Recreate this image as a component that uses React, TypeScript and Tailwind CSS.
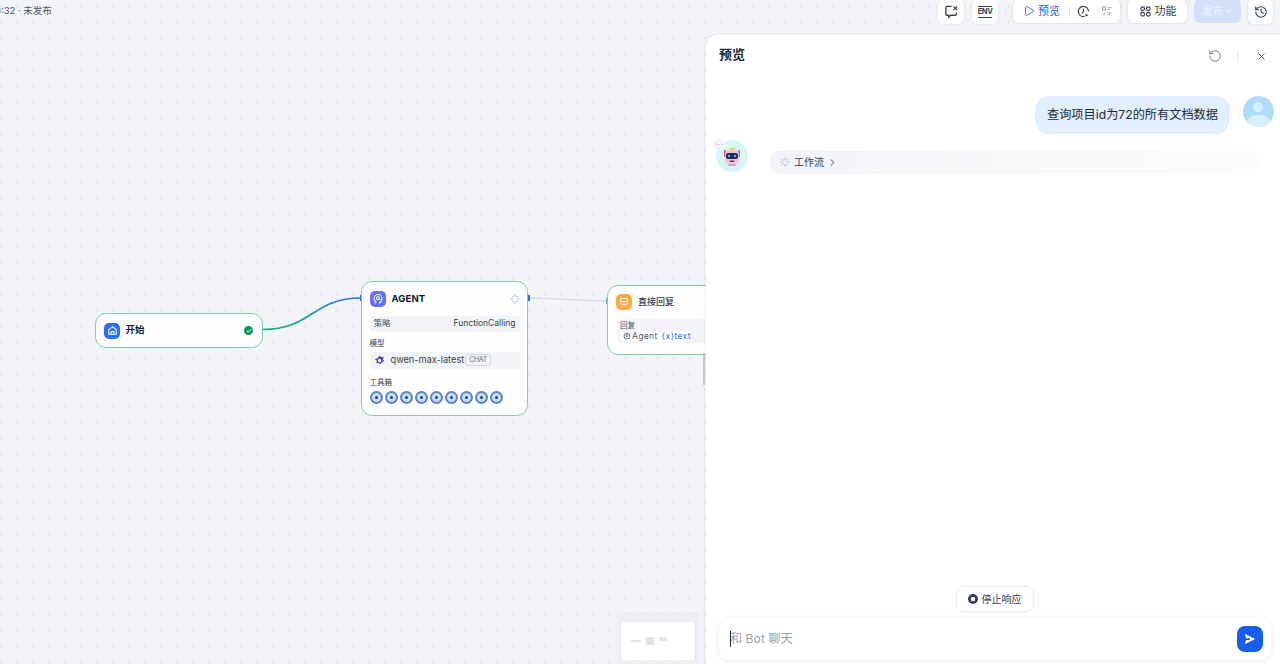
import React from "react";
import { Play, RotateCcw, X, ChevronDown, ChevronRight, History, Check, Loader } from "lucide-react";

const FONT = "font-['Inter','Noto_Sans_CJK_SC',sans-serif]";

function ToolBtn({ children, cls = "w-[26px]" }: { children: React.ReactNode; cls?: string }) {
  return (
    <div className={`h-[25px] ${cls} flex items-center justify-center rounded-md bg-white/80 shadow-[0_0_3px_rgba(16,24,40,0.12)] text-[#354052] shrink-0`}>
      {children}
    </div>
  );
}

function ToolDot() {
  return (
    <div className="w-[13.5px] h-[13.5px] rounded-full bg-[#5b80cc] flex items-center justify-center shrink-0">
      <div className="w-[9px] h-[9px] rounded-full bg-[#c4e2fb] flex items-center justify-center">
        <div className="w-[3.5px] h-[3.5px] rounded-full bg-[#1e3a8a]" />
      </div>
    </div>
  );
}

function Bot() {
  return (
    <svg viewBox="0 0 32 32" className="w-[32px] h-[32px]">
      <circle cx="16" cy="16" r="16" fill="#d5f5f6" />
      <rect x="14" y="8" width="5" height="1.6" fill="#f5c542" />
      <rect x="8" y="10" width="1.8" height="7" fill="#e0556f" />
      <rect x="22.2" y="10" width="1.8" height="7" fill="#e0556f" />
      <rect x="9" y="10" width="14" height="14" rx="4" fill="#eec6dc" />
      <rect x="10" y="13" width="12" height="6" rx="2" fill="#1e2a5a" />
      <circle cx="13" cy="16" r="1.2" fill="#5fb4f5" />
      <circle cx="19" cy="16" r="1.2" fill="#5fb4f5" />
      <rect x="13.5" y="20.5" width="5" height="1.4" rx="0.7" fill="#7a3550" />
      <rect x="12" y="24" width="8" height="2" rx="1" fill="#c9a6d8" />
    </svg>
  );
}

export default function App() {
  return (
    <div className={`${FONT} relative w-[1280px] h-[664px] overflow-hidden flex flex-col bg-[#f2f4f7] bg-[radial-gradient(#dfe2e8_0.7px,transparent_0.8px)] bg-[size:16px_16px] bg-[position:-7px_-2px]`}>
      {/* top bar */}
      <div className="h-[35px] shrink-0 flex items-start justify-between pr-[7px]">
        <div className="text-[9.5px] leading-[22px] text-[#475467] -ml-[5px] whitespace-nowrap">9:32 · 未发布</div>
        <div className="flex items-start -mt-[1px]">
          <ToolBtn>
            <svg viewBox="0 0 16 16" className="w-[15px] h-[15px]" fill="none" stroke="currentColor" strokeWidth="1.4">
              <path d="M8 2.5H3a1 1 0 0 0-1 1v7.5a1 1 0 0 0 1 1h2v2l2.5-2H12a1 1 0 0 0 1-1V9" />
              <path d="M10 2.5l4 4M14 2.5l-4 4" />
            </svg>
          </ToolBtn>
          <ToolBtn cls="w-[26px] ml-[8px]">
            <span className="text-[7.5px] font-bold leading-[10px] border-y-[1.5px] border-[#354052] tracking-tighter">ENV</span>
          </ToolBtn>
          <div className="w-px h-[12px] bg-[#e4e7ec] mt-[6px] ml-[7px]" />
          <div className="h-[24px] w-[107px] ml-[7px] flex items-center rounded-md bg-white shadow-[0_0_3px_rgba(16,24,40,0.16)] pl-[10px] shrink-0">
            <Play size={12} className="text-[#155eef]" strokeWidth={1.6} />
            <span className="text-[11px] text-[#155eef] ml-[3px] whitespace-nowrap">预览</span>
            <div className="w-px h-[11px] bg-[#e4e7ec] ml-[9px]" />
            <svg viewBox="0 0 16 16" className="w-[13px] h-[13px] ml-[7px] text-[#354052]" fill="none" stroke="currentColor" strokeWidth="1.4">
              <path d="M9 14.2A6.3 6.3 0 1 1 14.2 8" />
              <path d="M8 4.5V8l-2 2" />
              <path d="M10.5 10.5v4l3.5-2z" fill="currentColor" stroke="none" />
            </svg>
            <svg viewBox="0 0 16 16" className="w-[12px] h-[12px] ml-[11px] text-[#98a2b3]" fill="none" stroke="currentColor" strokeWidth="1.3">
              <rect x="2" y="2.5" width="4" height="4" />
              <path d="M9 3.5h5M9 6h3M2 11l1.5 1.5L6 10M9 10.5h5M9 13h3" />
            </svg>
          </div>
          <div className="h-[24px] w-[59px] ml-[8px] flex items-center justify-center gap-[3px] rounded-md bg-white shadow-[0_0_3px_rgba(16,24,40,0.16)] shrink-0">
            <svg viewBox="0 0 16 16" className="w-[13px] h-[13px] text-[#354052]" fill="none" stroke="currentColor" strokeWidth="1.5">
              <circle cx="4.5" cy="4.5" r="2.3" />
              <circle cx="11.5" cy="4.5" r="2.3" />
              <circle cx="4.5" cy="11.5" r="2.3" />
              <circle cx="11.5" cy="11.5" r="2.3" />
            </svg>
            <span className="text-[11px] text-[#354052] whitespace-nowrap">功能</span>
          </div>
          <div className="h-[24px] w-[47px] ml-[7px] flex items-center justify-center rounded-md bg-[#d3e0fa] shrink-0">
            <span className="text-[11px] text-[#eff4ff] whitespace-nowrap">发布</span>
            <ChevronDown size={10} className="text-[#eff4ff]" strokeWidth={2.5} />
          </div>
          <ToolBtn cls="w-[25px] ml-[7px] bg-white"><History size={14} strokeWidth={1.8} /></ToolBtn>
        </div>
      </div>

      <div className="flex-1 flex min-h-0">
        {/* canvas */}
        <div className="relative flex-1 min-w-0 overflow-hidden">
          <svg className="absolute left-0 top-0" width="706" height="629" fill="none">
            <defs>
              <linearGradient id="edge1" x1="262" x2="362" y1="0" y2="0" gradientUnits="userSpaceOnUse">
                <stop offset="0" stopColor="#17b26a" />
                <stop offset="1" stopColor="#2970ff" />
              </linearGradient>
            </defs>
            <path d="M263 294.5C312 294.5 312 263 361 263" stroke="url(#edge1)" strokeWidth="1.7" />
            <path d="M528 263C568 263 568 266 607 266" stroke="#d8dbe1" strokeWidth="1.7" />
            <rect x="261" y="291.5" width="2" height="6" fill="#17b26a" />
            <rect x="360" y="260" width="2" height="6" fill="#2970ff" />
            <rect x="528" y="260" width="2" height="6" fill="#2970ff" />
            <rect x="606" y="263" width="2" height="6" fill="#6f9cf7" />
          </svg>

          {/* start node */}
          <div className="absolute left-[95px] top-[278px] w-[168px] h-[35px] rounded-[11px] border-[1.7px] border-[#7fd0a8] bg-white/90 flex items-center pl-[8px] pr-[9px]">
            <div className="w-[16px] h-[16px] rounded-[5px] bg-[#2970ff] flex items-center justify-center">
              <svg viewBox="0 0 16 16" className="w-[11px] h-[11px]" fill="none" stroke="white" strokeWidth="1.5">
                <path d="M2.5 7L8 2.5 13.5 7v6.5h-11zM6 13.5V9.5h4v4" />
              </svg>
            </div>
            <span className="ml-[5.5px] text-[9.5px] font-semibold text-[#101828]">开始</span>
            <div className="ml-auto w-[9px] h-[9px] rounded-full bg-[#079455] flex items-center justify-center">
              <Check size={6} className="text-white" strokeWidth={4} />
            </div>
          </div>

          {/* agent node */}
          <div className="absolute left-[361px] top-[246px] w-[167px] h-[135px] rounded-[11px] border-[1.7px] border-[#7fd0a8] bg-white/90 px-[7.5px] pt-[8.5px]">
            <div className="flex items-center h-[17px]">
              <div className="w-[16px] h-[16px] rounded-[5px] bg-[#6172f3] flex items-center justify-center">
                <svg viewBox="0 0 16 16" className="w-[12px] h-[12px]" fill="none" stroke="white" strokeWidth="1.4">
                  <path d="M5 14v-2.5C3.5 10.5 2.8 9 2.8 7.5A5.2 5.2 0 0 1 13.2 7v1.5l-1 .3V11a1.5 1.5 0 0 1-1.5 1.5H10V14" />
                  <circle cx="8" cy="7" r="2" />
                </svg>
              </div>
              <span className="ml-[6px] text-[9.5px] font-bold text-[#101828] tracking-[0.01em]">AGENT</span>
              <Loader size={10} className="ml-auto text-[#84adff]" />
            </div>
            <div className="mt-[8px] h-[16px] rounded-[4px] bg-[#f2f4f7] flex items-center justify-between px-[4px]">
              <span className="text-[8.5px] text-[#475467]">策略</span>
              <span className="text-[8.5px] text-[#354052]">FunctionCalling</span>
            </div>
            <div className="mt-[7px] text-[7.5px] leading-[10px] text-[#344054]">模型</div>
            <div className="mt-[3px] h-[17px] rounded-[4px] bg-[#f2f4f7] flex items-center px-[4px]">
              <svg viewBox="0 0 16 16" className="w-[11px] h-[11px]">
                <path d="M8 1l3 2 3-.5-1 3.5 2 3-3.5 1-1.5 3.5-3-2-3.5.5.5-3.5L1 6.5 4.5 5z" fill="#4f46c8" />
                <circle cx="8" cy="8" r="2.4" fill="white" />
              </svg>
              <span className="ml-[6px] text-[9.2px] text-[#354052] whitespace-nowrap">qwen-max-latest</span>
              <span className="ml-[1px] h-[12px] px-[3px] rounded-[3px] border border-[#d0d5dd] text-[7px] leading-[10px] text-[#667085] tracking-tighter">CHAT</span>
            </div>
            <div className="mt-[9px] text-[7.5px] leading-[10px] text-[#344054]">工具箱</div>
            <div className="mt-[3px] flex gap-[1.5px]">
              {Array.from({ length: 9 }).map((_, i) => <ToolDot key={i} />)}
            </div>
          </div>

          {/* answer node */}
          <div className="absolute left-[607px] top-[250px] w-[167px] h-[70px] rounded-[11px] border-[1.7px] border-[#7fd0a8] bg-white/90 px-[8px] pt-[7.5px]">
            <div className="flex items-center h-[17px]">
              <div className="w-[16px] h-[16px] rounded-[5px] bg-[#f9ab45] flex items-center justify-center">
                <svg viewBox="0 0 16 16" className="w-[10px] h-[10px]" fill="none" stroke="white" strokeWidth="1.5">
                  <path d="M3 2.5h10v9H9.5L8 13.5l-1.500-2H3zM5.500 7.500h5" />
                </svg>
              </div>
              <span className="ml-[6px] text-[9px] font-medium text-[#354052] whitespace-nowrap">直接回复</span>
            </div>
            <div className="absolute left-[9px] right-0 top-[33px] h-[24px] bg-[#f2f4f7] rounded-l-[4px]" />
            <div className="relative mt-[10px] text-[7.5px] leading-[9px] text-[#475467] pl-[4px]">回复</div>
            <div className="relative mt-[1px] ml-[4px] w-[70px] h-[11px] bg-white rounded-[3px] flex items-center pl-[3px]">
              <svg viewBox="0 0 16 16" className="w-[8px] h-[8px] shrink-0" fill="none" stroke="#475467" strokeWidth="1.6">
                <circle cx="8" cy="8" r="6" /><circle cx="8" cy="7" r="2" />
              </svg>
              <span className="ml-[1px] text-[8.5px] leading-[10px] text-[#475467] tracking-[0.04em]">Agent</span>
              <span className="ml-[4px] text-[8.5px] leading-[10px] text-[#2970ff] tracking-[0.04em] whitespace-nowrap">{"{x}"}text</span>
            </div>
          </div>

          {/* resizer */}
          <div className="absolute left-[703px] top-[318px] w-[2px] h-[32px] bg-[#c6c9cf]" />

          {/* minimap */}
          <div className="absolute left-[617px] top-[577px] w-[82px] h-[52px] bg-[#eaecf0]/80 flex justify-center pt-[10px]">
            <div className="w-[72px] h-[38px] bg-white flex items-center pl-[9px] gap-[5px]">
              <div className="w-[10px] h-[1.5px] bg-[#e4e4e4]" />
              <div className="w-[8px] h-[8px] bg-[#e4e4e4]" />
              <div className="w-[8px] h-[4px] bg-[#e4e4e4] -mt-[4px]" />
            </div>
          </div>
        </div>

        {/* preview panel */}
        <div className="w-[574px] shrink-0 flex flex-col bg-white rounded-tl-xl shadow-[0_0_4px_rgba(16,24,40,0.08)] relative z-10">
          <div className="h-[38px] flex items-center pl-[13px] pr-[13px]">
            <span className="text-[13px] font-bold text-[#1d2939] mt-[1px]">预览</span>
            <RotateCcw size={14} className="ml-auto text-[#667085] mt-[4px]" strokeWidth={1.6} />
            <div className="w-px h-[11px] bg-[#e4e7ec] ml-[15px] mr-[18px] mt-[4px]" />
            <X size={11} className="text-[#475467] mt-[4px]" strokeWidth={2} />
          </div>
          <div className="flex-1 min-h-0 flex flex-col pt-[23px]">
            <div className="flex justify-end items-start pr-[6px]">
              <div className="h-[38px] w-[195px] rounded-[14px] bg-[#e1effe] flex items-center justify-center text-[12.2px] text-[#1d2939] whitespace-nowrap">查询项目id为72的所有文档数据</div>
              <div className="ml-[13px] w-[31px] h-[31px] rounded-full bg-[#aedcfd] relative overflow-hidden shrink-0">
                <div className="absolute left-[10px] top-[6px] w-[10px] h-[10px] rounded-full bg-[#d9efff]" />
                <div className="absolute left-[3px] top-[19px] w-[25px] h-[20px] rounded-full bg-[#d9efff]" />
              </div>
            </div>
            <div className="flex items-start mt-[6px] pl-[10px] pr-[22px]">
              <div className="relative w-[32px] h-[32px] shrink-0">
                <Bot />
                <div className="absolute -left-[3px] -top-[2px] w-[13px] h-[13px] rounded-full bg-[#f2f4f7] flex items-center justify-center gap-[1px]">
                  <span className="w-[1.5px] h-[1.5px] rounded-full bg-[#a4bcfd]" />
                  <span className="w-[1.5px] h-[1.5px] rounded-full bg-[#a4bcfd]" />
                  <span className="w-[1.5px] h-[1.5px] rounded-full bg-[#a4bcfd]" />
                </div>
              </div>
              <div className="ml-[22px] mt-[10px] flex-1 h-[24px] rounded-[10px] bg-gradient-to-r from-[#f2f4f7] to-[#fcfcfd] flex items-center pl-[10px]">
                <Loader size={10} className="text-[#98a2b3]" />
                <span className="ml-[4px] text-[10px] text-[#354052]">工作流</span>
                <ChevronRight size={11} className="ml-[3px] text-[#354052]" />
              </div>
            </div>
          </div>
          <div className="flex flex-col items-center">
            <div className="h-[26px] w-[78px] ml-[3px] rounded-lg border border-[#eaecf0] bg-white shadow-[0_1px_2px_rgba(16,24,40,0.05)] flex items-center justify-center text-[10px] text-[#354052]">
              <span className="w-[10px] h-[10px] rounded-full bg-[#344054] flex items-center justify-center mr-[4px]">
                <span className="w-[4px] h-[4px] bg-white rounded-[1px]" />
              </span>
              停止响应
            </div>
          </div>
          <div className="mt-[6px] ml-[13px] mr-[9px] mb-[4px] h-[42px] rounded-xl bg-white shadow-[0_1px_6px_rgba(16,24,40,0.1)] flex items-center pl-[11px] pr-[8px] relative">
            <div className="absolute left-[11px] top-[13px] w-px h-[16px] bg-[#1d2939]" />
            <span className="text-[12.2px] text-[#98a2b3]">和 Bot 聊天</span>
            <div className="ml-auto w-[26px] h-[26px] rounded-lg bg-[#155eef] flex items-center justify-center">
              <svg viewBox="0 0 16 16" className="w-[14px] h-[14px]" fill="white">
                <path d="M2 2l12 6-12 6 1.5-5H8V7H3.5z" />
              </svg>
            </div>
          </div>
        </div>
      </div>
    </div>
  );
}
